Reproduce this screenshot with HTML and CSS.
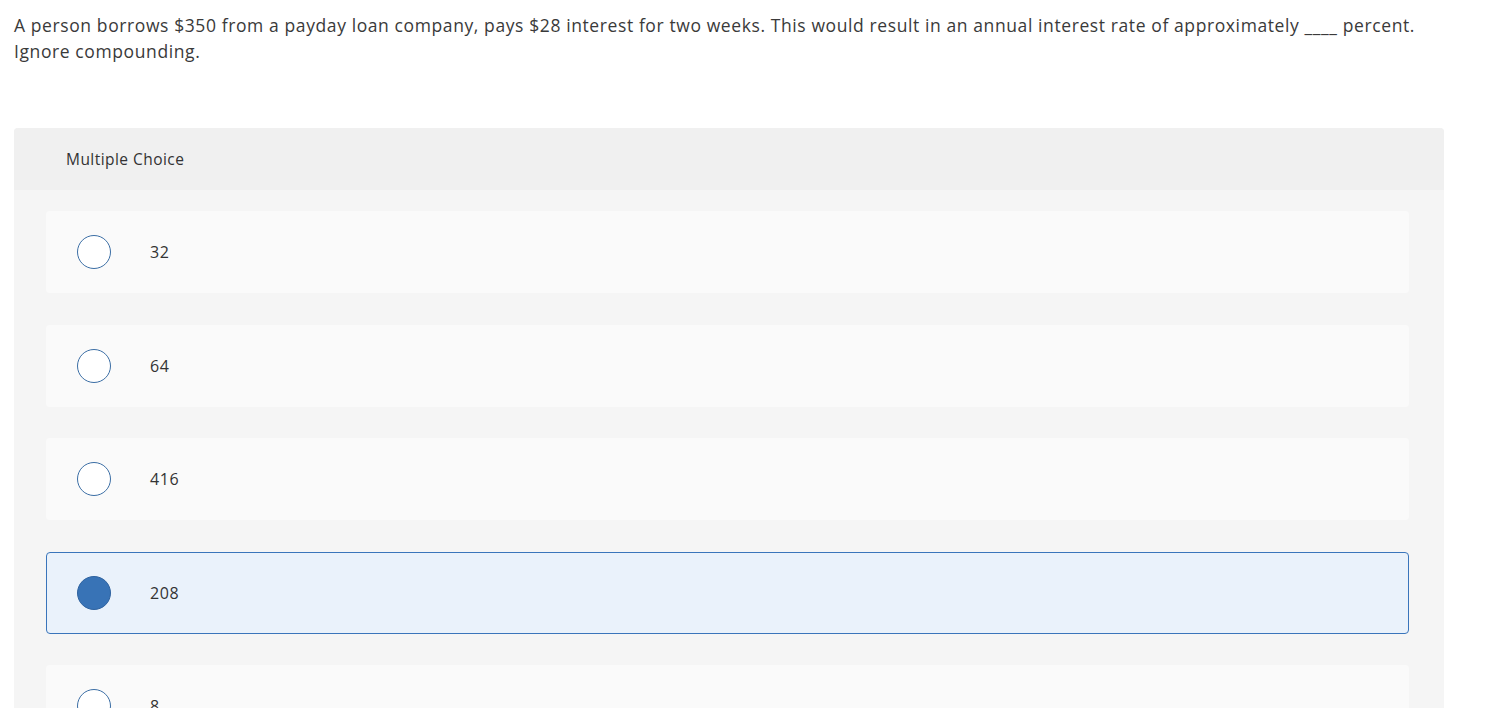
FILE: index.html
```html
<!DOCTYPE html>
<html>
<head>
<meta charset="utf-8">
<link rel="stylesheet" href="styles.css">
</head>
<body>
<div class="page">
  <p class="question">A person borrows $350 from a payday loan company, pays $28 interest for two weeks. This would result in an annual interest rate of approximately ____ percent. Ignore compounding.</p>
  <section class="panel">
    <header class="panel-head">Multiple Choice</header>
    <div class="choices">
      <label class="choice"><span class="radio"></span><span class="label">32</span></label>
      <label class="choice"><span class="radio"></span><span class="label">64</span></label>
      <label class="choice"><span class="radio"></span><span class="label">416</span></label>
      <label class="choice selected"><span class="radio"></span><span class="label">208</span></label>
      <label class="choice"><span class="radio"></span><span class="label">8</span></label>
    </div>
  </section>
</div>
</body>
</html>
```

FILE: styles.css
```css
html, body {
  margin: 0;
  padding: 0;
  background: #fff;
}
body {
  font-family: "Open Sans", "Liberation Sans", sans-serif;
  color: #333;
  overflow: hidden;
}
.page {
  height: 708px;
  overflow: hidden;
  padding: 0 55px 0 14px;
}
.question {
  margin: 12px 0 0;
  font-size: 17.5px;
  letter-spacing: 0.6px;
  line-height: 26px;
  color: #3a3a3a;
  width: 1420px;
}
.panel {
  margin-top: 64px;
  width: 1430px;
  background: #f5f5f5;
  border-radius: 4px 4px 0 0;
  min-height: 700px;
}
.panel-head {
  height: 62px;
  background: #f0f0f0;
  border-radius: 4px 4px 0 0;
  padding-left: 52px;
  display: flex;
  align-items: center;
  font-size: 15.5px;
  letter-spacing: 0.45px;
  color: #333;
}
.choices {
  padding: 21px 35px 0 32px;
  display: flex;
  flex-direction: column;
  gap: 31.5px;
}
.choice {
  height: 82px;
  box-sizing: border-box;
  background: #fafafa;
  border: 1px solid transparent;
  border-radius: 4px;
  display: flex;
  align-items: center;
  padding-left: 30px;
}
.radio {
  width: 34px;
  height: 34px;
  box-sizing: border-box;
  border-radius: 50%;
  border: 1px solid #3b6ea5;
  background: #fff;
  flex: none;
}
.label {
  margin-left: 39px;
  font-size: 16px;
  letter-spacing: 0.6px;
  color: #333;
}
.choice.selected {
  background: #eaf2fb;
  border-color: #3a75bb;
}
.choice.selected .radio {
  background: #3873b6;
  border-color: #2f63a0;
}
```
